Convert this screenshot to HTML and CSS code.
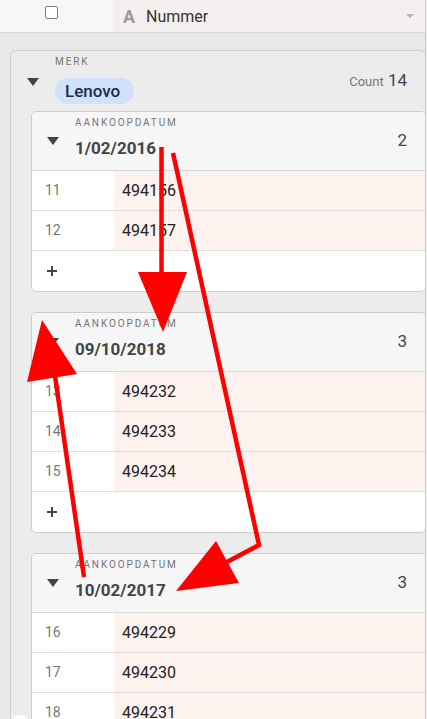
FILE: index.html
```html
<!DOCTYPE html>
<html lang="nl">
<head>
    <meta charset="UTF-8">
    <meta name="viewport" content="width=device-width, initial-scale=1.0">
    <title>Nummer per merk</title>
    <link rel="stylesheet" href="styles.css">
</head>
<body>
    <div class="frame">
        <!-- Kolomkop -->
        <div class="top-bar">
            <div class="top-left"><span class="checkbox"></span></div>
            <div class="top-field">
                <span class="type-icon">A</span>
                <span class="field-name">Nummer</span>
                <span class="caret"></span>
            </div>
        </div>

        <!-- Groep: merk -->
        <div class="group">
            <div class="group-head">
                <span class="toggle"></span>
                <div class="group-info">
                    <div class="label">Merk</div>
                    <span class="pill">Lenovo</span>
                </div>
                <div class="count"><span class="count-word">Count</span> 14</div>
            </div>

            <div class="sub">
                <div class="sub-head">
                    <span class="toggle"></span>
                    <div class="sub-info">
                        <div class="label">Aankoopdatum</div>
                        <div class="date">1/02/2016</div>
                    </div>
                    <div class="sub-count">2</div>
                </div>
                <div class="row"><div class="num">11</div><div class="val">494156</div></div>
                <div class="row"><div class="num">12</div><div class="val">494157</div></div>
                <div class="row add-row"><span class="plus"></span></div>
            </div>

            <div class="sub">
                <div class="sub-head">
                    <span class="toggle"></span>
                    <div class="sub-info">
                        <div class="label">Aankoopdatum</div>
                        <div class="date">09/10/2018</div>
                    </div>
                    <div class="sub-count">3</div>
                </div>
                <div class="row"><div class="num">13</div><div class="val">494232</div></div>
                <div class="row"><div class="num">14</div><div class="val">494233</div></div>
                <div class="row"><div class="num">15</div><div class="val">494234</div></div>
                <div class="row add-row"><span class="plus"></span></div>
            </div>

            <div class="sub">
                <div class="sub-head">
                    <span class="toggle"></span>
                    <div class="sub-info">
                        <div class="label">Aankoopdatum</div>
                        <div class="date">10/02/2017</div>
                    </div>
                    <div class="sub-count">3</div>
                </div>
                <div class="row"><div class="num">16</div><div class="val">494229</div></div>
                <div class="row"><div class="num">17</div><div class="val">494230</div></div>
                <div class="row"><div class="num">18</div><div class="val">494231</div></div>
            </div>
        </div>

        <span class="corner-dot"></span>

        <!-- Rode pijlen over de tabel -->
        <svg class="marks" width="427" height="719" viewBox="0 0 427 719">
            <g stroke="#ff0000" stroke-width="4.5" fill="none" stroke-linecap="butt" stroke-linejoin="miter">
                <line x1="161.5" y1="147" x2="161.5" y2="276"/>
                <polyline points="173,153 259,545 227,562"/>
                <line x1="84" y1="577" x2="55" y2="376"/>
            </g>
            <g fill="#ff0000">
                <polygon points="138,272 187,272 163,332"/>
                <polygon points="216,541 239,583 176,591"/>
                <polygon points="42,320 27,382 77,374"/>
            </g>
        </svg>
    </div>
</body>
</html>
```

FILE: styles.css
```css
body {
    margin: 0;
    background: #f0f0f0;
    font-family: Roboto, "Liberation Sans", Arial, sans-serif;
}
.frame {
    position: relative;
    width: 425px;
    height: 719px;
    overflow: hidden;
    background: #e8e8e8;
    border-right: 1px solid #cbcbcb;
}

/* kolomkop */
.top-bar {
    display: flex;
    height: 32px;
    border-bottom: 1px solid #d6d6d6;
}
.top-left {
    width: 113px;
    background: #f7f7f7;
    padding: 6px 0 0 45px;
    box-sizing: border-box;
}
.checkbox {
    display: block;
    width: 13px;
    height: 13px;
    box-sizing: border-box;
    border: 1px solid #7d7d7d;
    border-radius: 2px;
    background: #fff;
}
.top-field {
    flex: 1;
    display: flex;
    align-items: center;
    background: #f3f0ef;
    padding: 0 11px 0 10px;
}
.type-icon {
    font-size: 18px;
    font-weight: 700;
    color: #9a9a9a;
    width: 14px;
    margin-right: 9px;
}
.field-name {
    font-size: 16px;
    color: #333;
}
.caret {
    margin-left: auto;
    width: 0;
    height: 0;
    border-left: 4px solid transparent;
    border-right: 4px solid transparent;
    border-top: 4px solid #b5b5b5;
}

/* groepen */
.group {
    margin: 17px 0 0 10px;
    width: 416px;
    box-sizing: border-box;
    background: #ececec;
    border: 1px solid #cfcfcf;
    border-radius: 6px;
    padding-bottom: 40px;
}
.group-head {
    display: flex;
    align-items: flex-start;
    height: 60px;
    box-sizing: border-box;
    padding: 5px 18px 0 16px;
}
.toggle {
    flex: none;
    width: 0;
    height: 0;
    border-left: 6px solid transparent;
    border-right: 6px solid transparent;
    border-top: 8px solid #444;
    margin-top: 22px;
    margin-right: 16px;
}
.label {
    font-size: 10px;
    line-height: 12px;
    letter-spacing: 1.9px;
    text-transform: uppercase;
    color: #757575;
}
.pill {
    display: inline-block;
    margin-top: 10px;
    height: 26px;
    line-height: 26px;
    padding: 0 14px 0 10px;
    border-radius: 13px;
    background: #d0e1fb;
    color: #1b2a4b;
    font-size: 17px;
    font-weight: 500;
}
.count {
    margin-left: auto;
    margin-top: 14px;
    font-size: 17px;
    line-height: 20px;
    color: #444;
}
.count-word {
    font-size: 13px;
    color: #777;
}

.sub {
    margin: 0 0 20px 20px;
    width: 395px;
    box-sizing: border-box;
    background: #fff;
    border: 1px solid #cdcdcd;
    border-radius: 5px;
    overflow: hidden;
}
.sub-head {
    display: flex;
    align-items: flex-start;
    height: 59px;
    box-sizing: border-box;
    padding: 5px 18px 0 15px;
    background: #f6f6f6;
    border-bottom: 1px solid #d6d6d6;
}
.sub-head .toggle {
    margin-top: 20px;
}
.date {
    margin-top: 8px;
    font-size: 17px;
    line-height: 22px;
    font-weight: 700;
    color: #444;
}
.sub-count {
    margin-left: auto;
    margin-top: 13px;
    font-size: 17px;
    line-height: 20px;
    color: #444;
}

.row {
    display: flex;
    height: 40px;
    box-sizing: border-box;
    border-bottom: 1px solid #dedede;
}
.row:last-child {
    border-bottom: none;
}
.num {
    width: 82px;
    padding-left: 13px;
    box-sizing: border-box;
    font-size: 14px;
    line-height: 39px;
    color: #777;
}
.val {
    flex: 1;
    padding-left: 8px;
    background: #fdf2ee;
    font-size: 16px;
    line-height: 39px;
    color: #222;
}
.add-row {
    align-items: center;
    padding-left: 15px;
}
.plus {
    position: relative;
    width: 10px;
    height: 10px;
}
.plus::before,
.plus::after {
    content: "";
    position: absolute;
    background: #444;
}
.plus::before {
    left: 0;
    top: 4px;
    width: 10px;
    height: 2px;
}
.plus::after {
    left: 4px;
    top: 0;
    width: 2px;
    height: 10px;
}

.corner-dot {
    position: absolute;
    left: 10px;
    top: 715px;
    width: 20px;
    height: 20px;
    border-radius: 50%;
    background: #fff;
}
.marks {
    position: absolute;
    left: 0;
    top: 0;
    pointer-events: none;
}
```
